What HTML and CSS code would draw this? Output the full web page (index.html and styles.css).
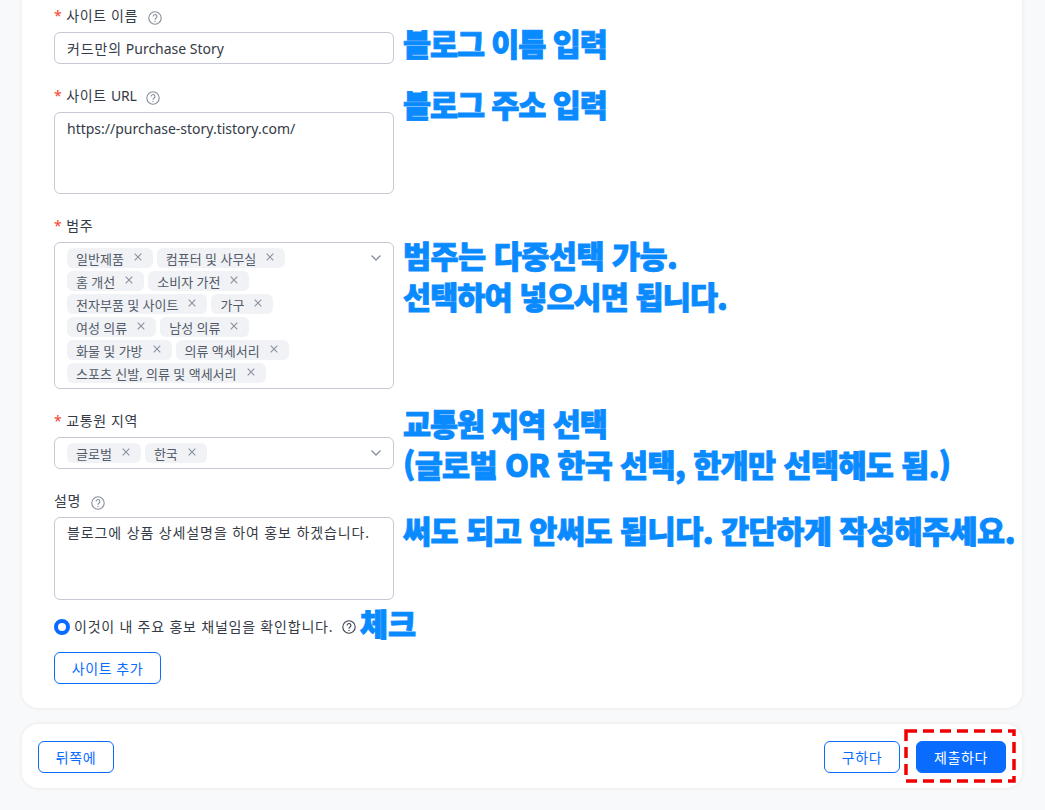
FILE: index.html
```html
<!DOCTYPE html>
<html lang="ko">
  <head>
    <meta charset="UTF-8" />
    <title>사이트 추가</title>
    <link rel="stylesheet" href="styles.css">
  </head>
  <body>
    <svg class="defs" width="0" height="0">
      <symbol id="help" viewBox="0 0 14 14">
        <circle cx="7" cy="7" r="6.2"/>
        <path d="M5.1 5.5a1.9 1.9 0 1 1 3 1.5c-.7.5-1.1.9-1.1 1.7"/>
        <circle class="dot" cx="7" cy="10.4" r=".7"/>
      </symbol>
      <symbol id="close" viewBox="0 0 8 8">
        <path d="M.7.7l6.6 6.6M7.3.7.7 7.3"/>
      </symbol>
      <symbol id="arrow" viewBox="0 0 12 8">
        <path d="M1.5 1.5 6 6l4.5-4.5"/>
      </symbol>
    </svg>
    <div class="page">
      <div class="card form-card">
        <div class="form-item">
          <div class="label"><span class="star">*</span> 사이트 이름 <svg class="help"><use href="#help"/></svg></div>
          <div class="input"><span class="ko">커드만의</span> Purchase Story</div>
        </div>
        <div class="form-item">
          <div class="label"><span class="star">*</span> <span>사이트 <span class="latin">URL</span></span> <svg class="help url-help"><use href="#help"/></svg></div>
          <div class="input textarea">https://purchase-story.tistory.com/</div>
        </div>
        <div class="form-item">
          <div class="label"><span class="star">*</span> 범주</div>
          <div class="select">
            <span class="tag">일반제품<svg class="x"><use href="#close"/></svg></span>
            <span class="tag">컴퓨터 및 사무실<svg class="x"><use href="#close"/></svg></span>
            <span class="tag">홈 개선<svg class="x"><use href="#close"/></svg></span>
            <span class="tag">소비자 가전<svg class="x"><use href="#close"/></svg></span>
            <span class="tag">전자부품 및 사이트<svg class="x"><use href="#close"/></svg></span>
            <span class="tag">가구<svg class="x"><use href="#close"/></svg></span>
            <span class="tag">여성 의류<svg class="x"><use href="#close"/></svg></span>
            <span class="tag">남성 의류<svg class="x"><use href="#close"/></svg></span>
            <span class="tag">화물 및 가방<svg class="x"><use href="#close"/></svg></span>
            <span class="tag">의류 액세서리<svg class="x"><use href="#close"/></svg></span>
            <span class="tag">스포츠 신발, 의류 및 액세서리<svg class="x"><use href="#close"/></svg></span>
            <svg class="arrow"><use href="#arrow"/></svg>
          </div>
        </div>
        <div class="form-item">
          <div class="label"><span class="star">*</span> 교통원 지역</div>
          <div class="select">
            <span class="tag">글로벌<svg class="x"><use href="#close"/></svg></span>
            <span class="tag">한국<svg class="x"><use href="#close"/></svg></span>
            <svg class="arrow"><use href="#arrow"/></svg>
          </div>
        </div>
        <div class="form-item">
          <div class="label">설명 <svg class="help"><use href="#help"/></svg></div>
          <div class="input textarea desc">블로그에 상품 상세설명을 하여 홍보 하겠습니다.</div>
        </div>
        <div class="check-row">
          <span class="radio"></span>
          <span>이것이 내 주요 홍보 채널임을 확인합니다.</span>
          <svg class="help dark"><use href="#help"/></svg>
        </div>
        <button class="btn add-btn">사이트 추가</button>
      </div>

      <div class="card footer-card">
        <button class="btn">뒤쪽에</button>
        <div class="footer-right">
          <button class="btn">구하다</button>
          <button class="btn primary">제출하다</button>
        </div>
      </div>

      <div class="note n1">블로그 이름 입력</div>
      <div class="note n2">블로그 주소 입력</div>
      <div class="note n3"><span class="wide">범주는 다중선택 가능.</span><br>선택하여 넣으시면 됩니다.</div>
      <div class="note n4">교통원 지역 선택<br><span class="wide">(글로벌 OR 한국 선택, 한개만 선택해도 됨.)</span></div>
      <div class="note n5">써도 되고 안써도 됩니다. 간단하게 작성해주세요.</div>
      <div class="note n6">체크</div>
      <svg class="red-box" viewBox="0 0 112 54"><rect x="2" y="2" width="108" height="50"/></svg>
    </div>
  </body>
</html>
```

FILE: styles.css
```css
html, body {
  margin: 0;
  height: 810px;
  overflow: hidden;
}

body {
  background-color: #f8f9fb;
  font-family: "Noto Sans", "Noto Sans CJK KR", sans-serif;
  font-size: 14px;
  color: #343a46;
}

.defs {
  position: absolute;
}

.page {
  position: relative;
  display: flow-root;
  height: 810px;
  padding: 0 23px 0 22px;
}

.card {
  background-color: white;
  border-radius: 16px;
  box-shadow: 0 0 4px 0 rgba(0, 0, 0, 0.08);
}

.form-card {
  margin-top: -20px;
  padding: 24px 32px 24px;
  height: 680px;
}

.form-item {
  margin-bottom: 20px;
}

.label {
  display: flex;
  align-items: center;
  gap: 4px;
  height: 22px;
  margin-bottom: 6px;
  letter-spacing: 0.6px;
  color: #343a46;
}

.latin {
  letter-spacing: -0.2px;
}

.star {
  color: #f5402c;
}

.help {
  width: 14px;
  height: 14px;
  margin-left: 6px;
  margin-top: 6px;
  color: #868d9b;
  fill: none;
  stroke: #868d9b;
  stroke-width: 1.1;
}

.url-help {
  margin-left: 5px;
}

#help .dot {
  fill: currentColor;
  stroke: none;
}

.help.dark {
  margin-left: 9px;
  margin-top: 2px;
  color: #3b414d;
  stroke: #3b414d;
}

.input {
  box-sizing: border-box;
  width: 340px;
  height: 32px;
  padding: 6px 12px 4px;
  border: 1px solid #c5cad4;
  border-radius: 6px;
  line-height: 20px;
}

.ko {
  letter-spacing: 0.9px;
}

.textarea {
  height: 82px;
}

.desc {
  height: 83px;
  padding-top: 5px;
  letter-spacing: 0.9px;
}

.select {
  box-sizing: border-box;
  position: relative;
  display: flex;
  flex-wrap: wrap;
  gap: 3px 4px;
  width: 340px;
  min-height: 32px;
  padding: 5px 40px 5px 12px;
  border: 1px solid #c5cad4;
  border-radius: 6px;
}

.tag {
  display: flex;
  align-items: center;
  height: 20px;
  padding: 0 11px 0 9px;
  background-color: #f0f2f5;
  border-radius: 6px;
  font-size: 13px;
  color: #525a68;
  white-space: pre;
}

.x {
  width: 8px;
  height: 8px;
  margin-left: 10px;
  margin-bottom: 2px;
  fill: none;
  stroke: #8a919f;
  stroke-width: 1.1;
}

.arrow {
  position: absolute;
  top: 11px;
  right: 11px;
  width: 12px;
  height: 8px;
  fill: none;
  stroke: #868d9b;
  stroke-width: 1.3;
}

.check-row {
  display: flex;
  align-items: center;
  height: 20px;
  margin-top: -4px;
  letter-spacing: 0.8px;
}

.radio {
  box-sizing: border-box;
  width: 16px;
  height: 16px;
  margin-top: 2px;
  margin-right: 4px;
  border: 4.5px solid #0a6cff;
  border-radius: 50%;
}

.btn {
  box-sizing: border-box;
  height: 32px;
  padding: 0 16px;
  border: 1px solid #0a6cff;
  border-radius: 6px;
  background-color: white;
  color: #0a6cff;
  font-family: inherit;
  font-size: 14px;
  letter-spacing: 0.6px;
}

.add-btn {
  display: block;
  margin-top: 16px;
  width: 107px;
  padding: 0;
}

.footer-card {
  display: flex;
  justify-content: space-between;
  align-items: center;
  height: 62px;
  margin-top: 16px;
  padding: 2px 16px 0;
}

.footer-card .btn {
  width: 76px;
  padding: 0;
}

.footer-right {
  display: flex;
  gap: 16px;
}

.footer-card .primary {
  width: 90px;
  background-color: #0a6cff;
  color: white;
}

.note {
  position: absolute;
  left: 403px;
  font-family: "Noto Sans CJK KR", sans-serif;
  font-weight: 900;
  font-size: 30.5px;
  line-height: 41px;
  letter-spacing: -1.1px;
  color: #0a8aff;
  -webkit-text-stroke: 0.9px #0a8aff;
  white-space: nowrap;
}

.n1 { top: 23px; }
.n2 { top: 84px; }
.n3 { top: 235px; letter-spacing: -0.9px; }
.n3 .wide { letter-spacing: -0.5px; }
.n4 { top: 403px; }
.n4 .wide { letter-spacing: -0.6px; }
.n5 { top: 510px; letter-spacing: -0.5px; }
.n6 { top: 603px; left: 360px; letter-spacing: 0; }

.red-box {
  position: absolute;
  left: 904px;
  top: 729px;
  width: 112px;
  height: 54px;
  fill: none;
  stroke: #f00000;
  stroke-width: 3.5;
  stroke-dasharray: 11 6;
}
```
